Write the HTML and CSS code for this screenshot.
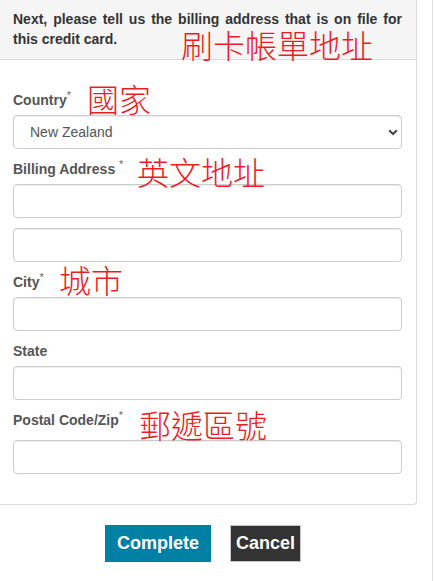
FILE: index.html
```html
<!DOCTYPE html>
<html lang="en">
<head>
<meta charset="utf-8">
<title>Billing address</title>
<link rel="stylesheet" href="styles.css">
</head>
<body>
<div class="viewport">
  <div class="panel">
    <div class="panel-heading">
      <p class="intro">Next, please tell us the billing address that is on file for this credit card.</p>
      <span class="note note-heading">刷卡帳單地址</span>
    </div>
    <div class="panel-body">
      <div class="field">
        <label class="label">Country<sup class="req">*</sup><span class="note note-country">國家</span></label>
        <div class="select-wrap">
          <select class="control select"><option>New Zealand</option></select>
          <svg class="chevron" width="10" height="7" viewBox="0 0 10 7"><path d="M1.2 1.3 L5 5 L8.8 1.3" fill="none" stroke="#444" stroke-width="2"/></svg>
        </div>
      </div>
      <div class="field">
        <label class="label">Billing Address <sup class="req">*</sup><span class="note note-billing">英文地址</span></label>
        <input class="control" type="text">
      </div>
      <div class="field">
        <input class="control" type="text">
      </div>
      <div class="field">
        <label class="label">City<sup class="req">*</sup><span class="note note-city">城市</span></label>
        <input class="control" type="text">
      </div>
      <div class="field">
        <label class="label">State</label>
        <input class="control" type="text">
      </div>
      <div class="field field-last">
        <label class="label label-wide">Postal Code/Zip<sup class="req">*</sup><span class="note note-postal">郵遞區號</span></label>
        <input class="control" type="text">
      </div>
    </div>
  </div>
  <div class="actions">
    <button class="btn btn-primary" type="button">Complete</button>
    <button class="btn btn-dark" type="button">Cancel</button>
  </div>
</div>
</body>
</html>
```

FILE: styles.css
```css
* { box-sizing: border-box; }

html, body {
  margin: 0;
  padding: 0;
  background: #fff;
}

body {
  font-family: "Liberation Sans", Arial, sans-serif;
  color: #333;
}

.viewport {
  width: 433px;
  min-height: 581px;
  border-right: 1px solid #e0e0e0;
}

.panel {
  width: 417px;
  border-right: 1px solid #dcdcdc;
  border-bottom: 1px solid #dcdcdc;
  border-bottom-right-radius: 4px;
}

.panel-heading {
  position: relative;
  height: 60px;
  background: #f5f5f5;
  border-bottom: 1px solid #dcdcdc;
  padding: 9px 14px 0 13px;
}

.intro {
  margin: 0;
  font-size: 14px;
  font-weight: bold;
  line-height: 20px;
  text-align: justify;
  color: #333;
}

.panel-body {
  padding: 30px 14px 30px 13px;
}

.field {
  margin-bottom: 10px;
}

.field-last {
  margin-bottom: 0;
}

.label {
  position: relative;
  display: block;
  font-size: 14px;
  font-weight: bold;
  line-height: 20px;
  color: #555;
  margin-bottom: 5px;
}

.label-wide {
  margin-bottom: 10px;
}

.req {
  font-size: 11px;
  line-height: 0;
  vertical-align: 6px;
  font-weight: normal;
  color: #666;
}

.control {
  display: block;
  width: 389px;
  height: 34px;
  margin: 0;
  border: 1px solid #ccc;
  border-radius: 4px;
  background: #fff;
  box-shadow: inset 0 1px 1px rgba(0, 0, 0, 0.075);
  font-family: "Liberation Sans", Arial, sans-serif;
  font-size: 14px;
  color: #555;
  padding: 0 12px;
}

.select-wrap {
  position: relative;
  width: 389px;
}

.select {
  appearance: none;
  -webkit-appearance: none;
  padding-left: 16px;
}

.chevron {
  position: absolute;
  left: 375px;
  top: 14px;
  pointer-events: none;
}

.note {
  position: absolute;
  font-family: "Noto Sans CJK TC", "Noto Sans CJK SC", sans-serif;
  font-weight: 300;
  font-size: 32px;
  line-height: 32px;
  color: #ec1c24;
  white-space: nowrap;
  letter-spacing: 0;
}

.note-heading { left: 181px; top: 28px; }
.note-country { left: 74px; top: -8px; }
.note-billing { left: 124px; top: -4px; }
.note-city { left: 46px; top: -9px; }
.note-postal { left: 126px; top: -2px; }

.actions {
  display: flex;
  gap: 19px;
  padding: 20px 0 0 105px;
}

.btn {
  height: 37px;
  margin: 0;
  border: 0;
  border-radius: 0;
  font-family: "Liberation Sans", Arial, sans-serif;
  font-size: 18px;
  font-weight: bold;
  color: #fff;
  cursor: pointer;
}

.btn-primary {
  width: 106px;
  background: #0080a4;
}

.btn-dark {
  width: 71px;
  background: #333;
  border: 1px solid #c8c8c8;
  padding: 0;
}
```
